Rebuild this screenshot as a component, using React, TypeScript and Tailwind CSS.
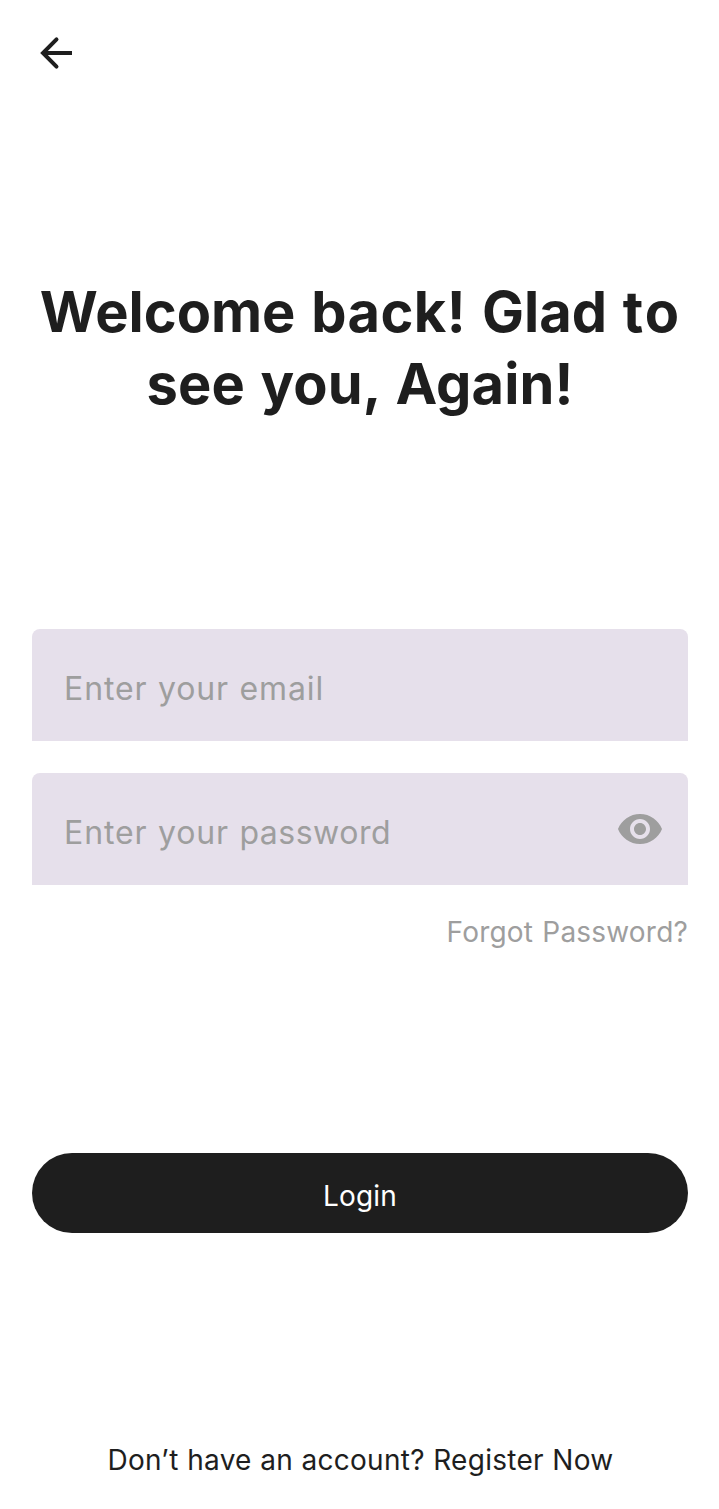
export default function App() {
  return (
    <main className="flex h-[1509px] w-[719px] flex-col bg-white font-['Inter',sans-serif] text-[#1e1e1e]">
      <header className="flex h-[106px] items-center pl-8">
        <button aria-label="Back" className="size-12">
          <svg viewBox="0 0 48 48" className="size-12" fill="none" stroke="currentColor" strokeWidth="4">
            <path d="M40 24H12" />
            <path d="M24.5 10.4 11 24l13.5 13.6" strokeLinecap="round" strokeLinejoin="miter" />
          </svg>
        </button>
      </header>
      <h1 className="mt-[170px] flex h-[144px] flex-col items-center pl-[2px] text-[56px] leading-[72px] font-bold whitespace-nowrap">
        <span className="[word-spacing:2.6px]">
          Welcome <span className="tracking-[0.4px]">back!</span> Glad <span className="tracking-[2px]">to</span>
        </span>
        <span className="pr-px tracking-[0.1px] [word-spacing:2.3px]">see you, Again!</span>
      </h1>
      <form className="mt-[209px] flex flex-col pr-[31px] pl-8">
        <div className="flex h-28 items-center rounded-t-lg bg-[#e6e0eb] px-8 pt-2 text-[32px] tracking-[0.9px] text-[#9e9e9e] [word-spacing:0.5px]">
          <span>Enter your email</span>
        </div>
        <div className="mt-8 flex h-28 items-center justify-between rounded-t-lg bg-[#e6e0eb] pr-6 pl-8 text-[32px] tracking-[0.9px] text-[#9e9e9e] [word-spacing:0.5px]">
          <span className="pt-2">
            Enter your <span className="tracking-[0.5px]">password</span>
          </span>
          <svg viewBox="0 0 24 24" className="size-12" fill="currentColor">
            <path d="M12 4.5C7 4.5 2.73 7.61 1 12c1.73 4.39 6 7.5 11 7.5s9.27-3.11 11-7.5c-1.73-4.39-6-7.5-11-7.5zM12 17c-2.76 0-5-2.24-5-5s2.24-5 5-5 5 2.24 5 5-2.24 5-5 5zm0-8c-1.66 0-3 1.34-3 3s1.34 3 3 3 3-1.34 3-3-1.34-3-3-3z" />
          </svg>
        </div>
        <a className="mt-[27px] self-end text-[28px] leading-10 tracking-[0.2px] text-[#9e9e9e] [word-spacing:1px]">Forgot Password?</a>
        <button type="button" className="mt-[201px] h-20 rounded-full bg-[#1e1e1e] pt-1.5 text-[28px] tracking-[0.2px] text-white">
          Login
        </button>
      </form>
      <p className="mt-[207px] pl-[2px] text-center text-[28px] leading-10 tracking-[0.28px] [word-spacing:0.3px]">
        Don’t have an account? Register Now
      </p>
    </main>
  );
}
